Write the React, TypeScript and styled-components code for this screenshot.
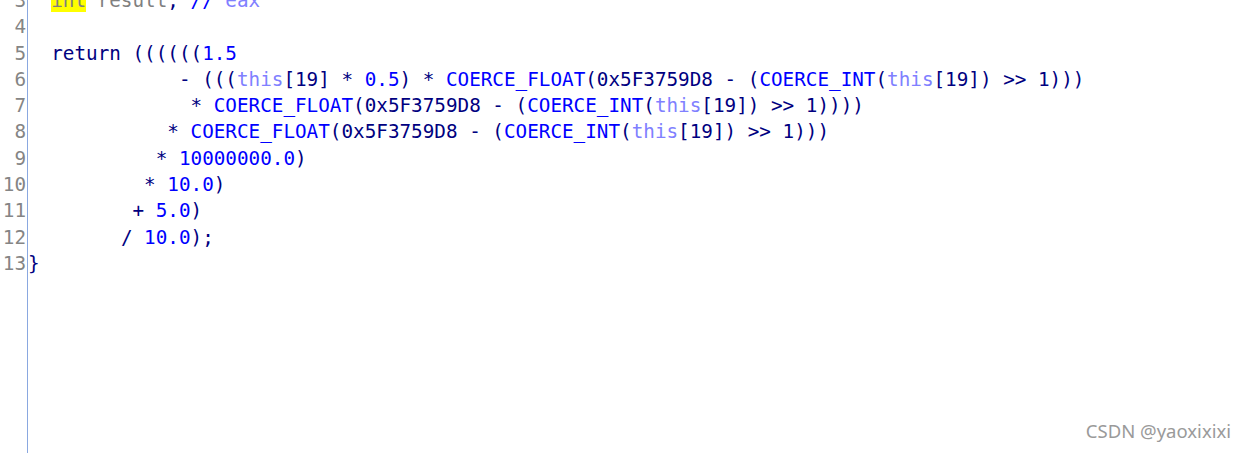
import React from "react";
import styled, { createGlobalStyle } from "styled-components";

const Global = createGlobalStyle`
  html, body { margin: 0; padding: 0; background: #ffffff; }
  body { width: 1246px; height: 453px; overflow: hidden; }
`;

type Kind = "kw" | "op" | "num" | "fn" | "this" | "gray" | "hl" | "cmt" | "cmtText";
type Tok = [string, Kind];

const lines: { n: number; indent: number; toks: Tok[] }[] = [
  { n: 3, indent: 2, toks: [["int", "hl"], [" result", "gray"], [";", "op"], [" //", "cmt"], [" eax", "cmtText"]] },
  { n: 4, indent: 0, toks: [] },
  { n: 5, indent: 2, toks: [["return", "kw"], [" ((((((", "op"], ["1.5", "num"]] },
  {
    n: 6,
    indent: 13,
    toks: [
      ["- (((", "op"], ["this", "this"], ["[19] * ", "op"], ["0.5", "num"], [") * ", "op"],
      ["COERCE_FLOAT", "fn"], ["(0x5F3759D8 - (", "op"], ["COERCE_INT", "fn"], ["(", "op"],
      ["this", "this"], ["[19]) >> 1)))", "op"],
    ],
  },
  {
    n: 7,
    indent: 14,
    toks: [
      ["* ", "op"], ["COERCE_FLOAT", "fn"], ["(0x5F3759D8 - (", "op"], ["COERCE_INT", "fn"], ["(", "op"],
      ["this", "this"], ["[19]) >> 1))))", "op"],
    ],
  },
  {
    n: 8,
    indent: 12,
    toks: [
      ["* ", "op"], ["COERCE_FLOAT", "fn"], ["(0x5F3759D8 - (", "op"], ["COERCE_INT", "fn"], ["(", "op"],
      ["this", "this"], ["[19]) >> 1)))", "op"],
    ],
  },
  { n: 9, indent: 11, toks: [["* ", "op"], ["10000000.0", "num"], [")", "op"]] },
  { n: 10, indent: 10, toks: [["* ", "op"], ["10.0", "num"], [")", "op"]] },
  { n: 11, indent: 9, toks: [["+ ", "op"], ["5.0", "num"], [")", "op"]] },
  { n: 12, indent: 8, toks: [["/ ", "op"], ["10.0", "num"], [");", "op"]] },
  { n: 13, indent: 0, toks: [["}", "op"]] },
];

const colors: Record<Kind, string> = {
  kw: "#000080",
  op: "#000080",
  num: "#0000ff",
  fn: "#0000ff",
  this: "#8080ff",
  gray: "#808080",
  hl: "#808080",
  cmt: "#0000ff",
  cmtText: "#8080ff",
};

const Editor = styled.div`
  display: flex;
  height: 453px;
  font-family: "DejaVu Sans Mono", "Liberation Mono", monospace;
  font-size: 19.3px;
  background: #ffffff;
`;

const Gutter = styled.div`
  width: 27px;
  flex: none;
  border-right: 1px solid #8aa8e0;
  display: flex;
  flex-direction: column;
  align-items: flex-end;
  margin-top: -12px;
`;

const LineNo = styled.div`
  height: 26.3px;
  line-height: 26.3px;
  color: #858585;
  padding-right: 1px;
  white-space: pre;
`;

const Code = styled.div`
  flex: 1;
  display: flex;
  flex-direction: column;
  padding-left: 0;
  margin-top: -12px;
`;

const CodeLine = styled.div`
  height: 26.3px;
  line-height: 26.3px;
  white-space: pre;
`;

const Tk = styled.span<{ $kind: Kind }>`
  color: ${(p) => colors[p.$kind]};
  background: ${(p) => (p.$kind === "hl" ? "#ffff00" : "transparent")};
`;

const Watermark = styled.div`
  position: absolute;
  right: 15px;
  top: 418px;
  font-family: "Noto Sans", "Open Sans", sans-serif;
  font-size: 18.5px;
  color: #9a9a9a;
`;

export default function App() {
  return (
    <>
      <Global />
      <Editor>
        <Gutter>
          {lines.map((l) => (
            <LineNo key={l.n}>{l.n}</LineNo>
          ))}
        </Gutter>
        <Code>
          {lines.map((l) => (
            <CodeLine key={l.n}>
              {" ".repeat(l.indent)}
              {l.toks.map((t, i) => (
                <Tk key={i} $kind={t[1]}>
                  {t[0]}
                </Tk>
              ))}
            </CodeLine>
          ))}
        </Code>
      </Editor>
      <Watermark>CSDN @yaoxixixi</Watermark>
    </>
  );
}
